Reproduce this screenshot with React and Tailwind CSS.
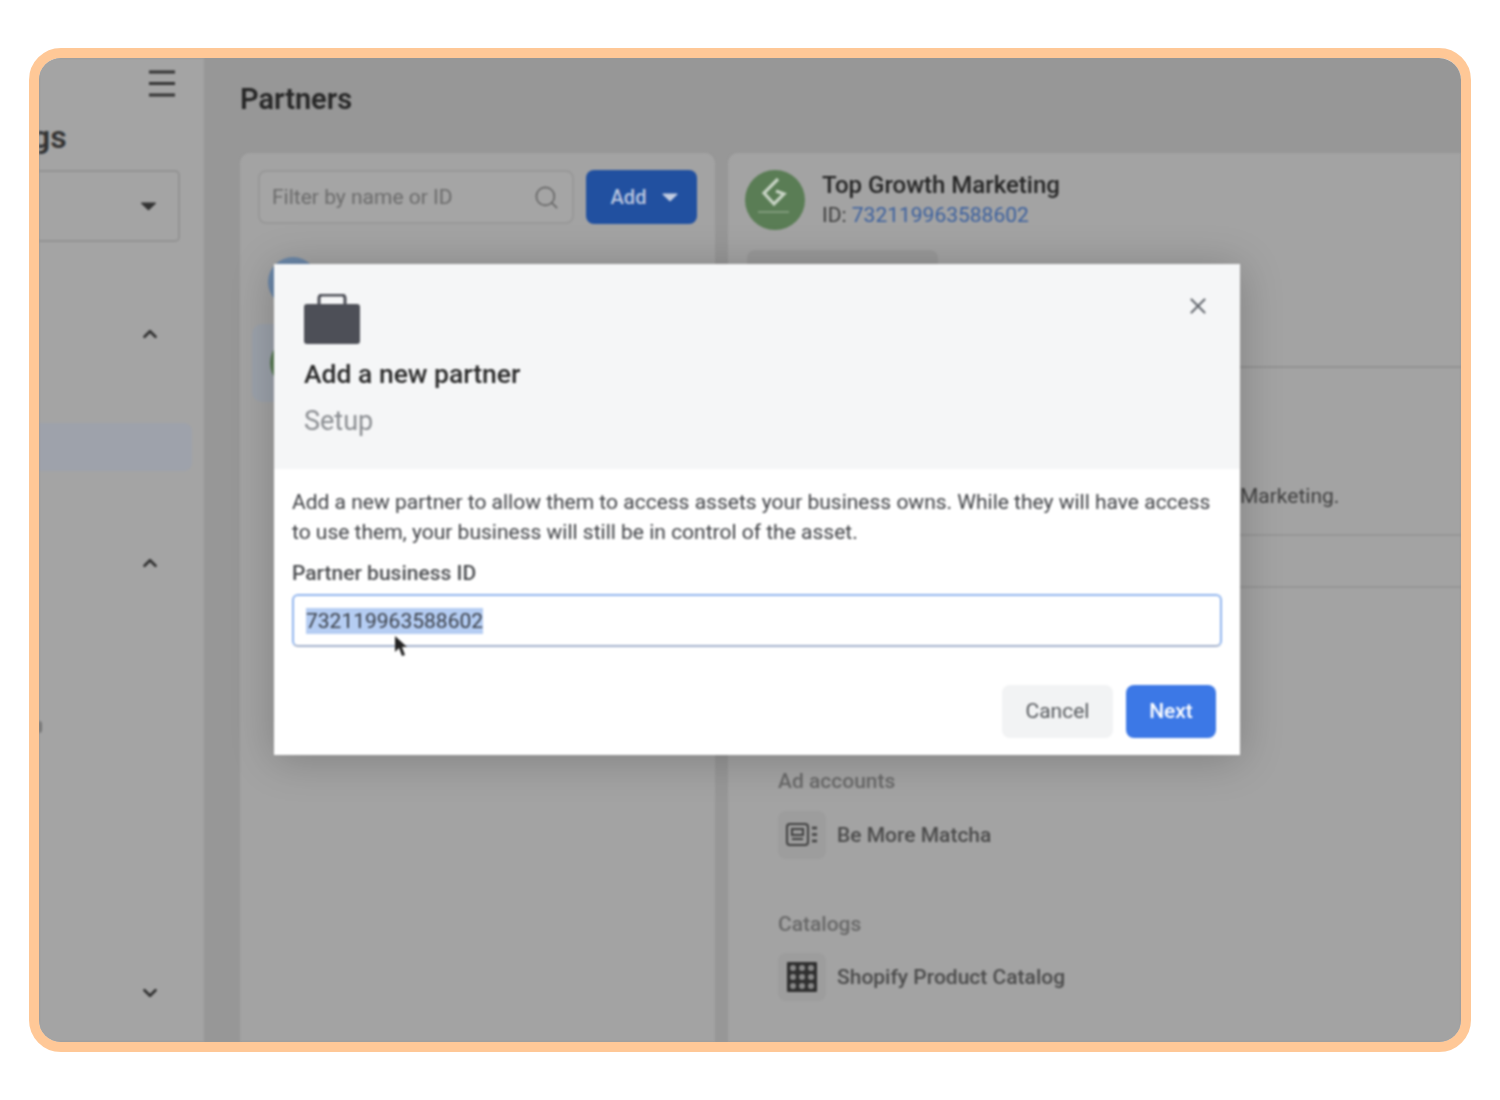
import { ChevronDown, ChevronUp, Search, X } from "lucide-react";

const Caret = ({ className }) => (
  <svg viewBox="0 0 16 10" className={className} fill="currentColor">
    <path d="M1 1.5h14a.6.6 0 0 1 .4 1l-6.8 6.4a.9.9 0 0 1-1.2 0L.6 2.5a.6.6 0 0 1 .4-1z" />
  </svg>
);

const Sidebar = () => (
  <div className="flex h-full w-[165px] shrink-0 flex-col overflow-hidden bg-[#a4a4a4] text-[#333]">
    <div className="mt-[12px] flex justify-end pr-[29px]">
      <svg viewBox="0 0 26 27" className="h-[27px] w-[26px]" stroke="#333" strokeWidth="2.8">
        <path d="M0 2h26M0 13.5h26M0 25h26" />
      </svg>
    </div>
    <div className="mt-[21px] -ml-[7px] h-[38px] text-[32px] leading-[38px] font-semibold">gs</div>
    <div className="mt-[14px] flex h-[72px] w-[141px] items-center justify-end rounded-r-[5px] border-2 border-l-0 border-[#939393] pr-[21px]">
      <Caret className="h-[10px] w-[17px] text-[#333]" />
    </div>
    <div className="mt-[81px] flex justify-end pr-[43px]">
      <ChevronUp size={22} strokeWidth={3} />
    </div>
    <div className="mt-[78px] h-[48px] w-[153px] rounded-r-[8px] bg-[#9ea2ab]" />
    <div className="mt-[81px] flex justify-end pr-[43px]">
      <ChevronUp size={22} strokeWidth={3} />
    </div>
    <div className="mt-[147px] h-[12px] w-[3px] rounded-r-sm bg-[#777]" />
    <div className="mt-[249px] flex justify-end pr-[43px]">
      <ChevronDown size={22} strokeWidth={3} />
    </div>
  </div>
);

const ListCard = () => (
  <div className="h-full w-[475px] shrink-0 overflow-hidden rounded-t-[10px] bg-[#a3a3a3] px-[18px] pt-[17px]">
    <div className="flex gap-[12px]">
      <div className="flex h-[54px] w-[316px] items-center justify-between rounded-[8px] border-2 border-[#989898] bg-[#a5a5a5] pr-[12px] pl-[12px]">
        <span className="pt-[1px] text-[21px] text-[#6b6b6b]">Filter by name or ID</span>
        <Search size={27} strokeWidth={1.5} className="text-[#666]" />
      </div>
      <div className="flex h-[54px] w-[111px] items-center justify-center gap-[16px] rounded-[8px] bg-[#2150a0] pl-[6px] text-[20px] font-medium text-[#bcc8e0]">
        <span>Add</span>
        <Caret className="h-[10px] w-[16px] text-[#c4cee2]" />
      </div>
    </div>
    <div className="mt-[33px] ml-[10px] h-[50px] w-[50px] rounded-full bg-[#6b87a8]" />
    <div className="mt-[17px] -ml-[6px] flex h-[78px] w-[300px] items-center rounded-[10px] bg-[#9ca2ab] pl-[18px]">
      <div className="h-[50px] w-[50px] rounded-full bg-[#5a7d55]" />
    </div>
  </div>
);

const Tile = ({ children }) => (
  <div className="flex h-[48px] w-[48px] items-center justify-center rounded-[8px] bg-[#9d9d9d]">{children}</div>
);

const DetailCard = () => (
  <div className="h-full min-w-0 flex-1 overflow-hidden rounded-tl-[10px] bg-[#a3a3a3]">
    <div className="h-[215px] border-b-2 border-[#929292] pt-[17px] pl-[17px]">
      <div className="flex items-center gap-[17px]">
        <div className="flex h-[60px] w-[60px] items-center justify-center rounded-full bg-[#5a7d55]">
          <svg viewBox="0 0 60 60" className="h-[60px] w-[60px]" fill="none" stroke="#c7d3c4" strokeWidth="3.2">
            <path d="M33 9 19 23l10 11 10-10-8-3" />
            <path d="M13 42h31" stroke="#7f9a7b" strokeWidth="2" />
          </svg>
        </div>
        <div className="-mt-[1px]">
          <div className="text-[24px] leading-[30px] font-medium text-[#262626]">Top Growth Marketing</div>
          <div className="text-[21px] leading-[30px] text-[#3d3d3d]">
            ID: <span className="text-[#3a5f9e]">732119963588602</span>
          </div>
        </div>
      </div>
      <div className="mt-[20px] ml-[2px] h-[40px] w-[191px] rounded-[8px] bg-[#999]" />
    </div>
    <div className="flex h-[168px] items-end border-b-2 border-[#969696] pb-[23px] pl-[512px] text-[21px] leading-[30px] text-[#3f3f3f]">
      Marketing.
    </div>
    <div className="h-[52px] border-b-2 border-[#969696]" />
    <div className="mt-[178px] pl-[50px]">
      <div className="text-[21px] leading-[30px] font-medium text-[#686868]">Ad accounts</div>
      <div className="mt-[15px] flex items-center gap-[11px]">
        <Tile>
          <svg viewBox="0 0 32 24" className="h-[24px] w-[32px]" fill="none" stroke="#3f3f3f" strokeWidth="2">
            <rect x="1" y="1" width="21" height="21" rx="3" />
            <rect x="6" y="6" width="11" height="6" />
            <path d="M6 16h11" />
            <path d="M26 5h5M26 11.500h5M26 18h5" strokeWidth="2.4" />
          </svg>
        </Tile>
        <span className="pt-[1px] text-[21px] font-medium text-[#4b4b4b]">Be More Matcha</span>
      </div>
      <div className="mt-[50px] text-[21px] leading-[30px] font-medium text-[#686868]">Catalogs</div>
      <div className="mt-[14px] flex items-center gap-[11px]">
        <Tile>
          <svg viewBox="0 0 30 30" className="h-[30px] w-[30px]" fill="#8a8a8a">
            <rect width="30" height="30" rx="1" fill="#2f2f2f" />
            <rect x="3" y="3" width="6" height="6" rx="3" />
            <rect x="12" y="3" width="6" height="6" rx="3" />
            <rect x="21" y="3" width="6" height="6" rx="3" />
            <rect x="3" y="12" width="6" height="6" rx="3" />
            <rect x="12" y="12" width="6" height="6" rx="3" />
            <rect x="21" y="12" width="6" height="6" rx="3" />
            <rect x="3" y="21" width="6" height="6" rx="3" />
            <rect x="12" y="21" width="6" height="6" rx="3" />
            <rect x="21" y="21" width="6" height="6" rx="3" />
          </svg>
        </Tile>
        <span className="pt-[2px] text-[21px] font-medium text-[#4b4b4b]">Shopify Product Catalog</span>
      </div>
    </div>
  </div>
);

const Modal = () => (
  <div className="absolute top-[206px] left-[235px] flex h-[491px] w-[966px] flex-col bg-white shadow-[0_4px_40px_rgba(0,0,0,0.22)]">
    <div className="relative h-[205px] bg-[#f5f6f7] pt-[30px] pl-[30px]">
      <svg viewBox="0 0 56 50" className="h-[50px] w-[56px]" fill="#4d4f57">
        <path d="M15 11V4a3 3 0 0 1 3-3h20a3 3 0 0 1 3 3v7" fill="none" stroke="#4d4f57" strokeWidth="3" />
        <rect x="0" y="10" width="56" height="40" rx="3" />
      </svg>
      <div className="mt-[13px] text-[26.500px] leading-[34px] font-medium text-[#2b2b2b]">Add a new partner</div>
      <div className="mt-[13px] text-[27px] leading-[34px] text-[#8a8d91]">Setup</div>
      <X size={26} strokeWidth={2} className="absolute top-[29px] right-[29px] text-[#666a70]" />
    </div>
    <div className="relative flex-1 pt-[18px] pr-[18px] pl-[18px]">
      <p className="text-[21px] leading-[30px] text-[#3f4145]">
        Add a new partner to allow them to access assets your business owns. While they will have access
        <br />
        to use them, your business will still be in control of the asset.
      </p>
      <div className="mt-[11px] text-[21px] leading-[30px] font-medium text-[#4b4d50]">Partner business ID</div>
      <div className="mt-[6px] flex h-[53px] items-center rounded-[6px] border-2 border-[#8fb4ee] border-b-[#a3b1cc] pl-[12px]">
        <span className="bg-[#b5cdf3] text-[21px] leading-[26px] text-[#3a3f48]">732119963588602</span>
      </div>
      <svg viewBox="0 0 14 22" className="absolute top-[167px] left-[120px] h-[22px] w-[14px]" fill="#222">
        <path d="M1 0v16l4-4 3 8 3-1-3-8h5z" />
      </svg>
      <div className="mt-[38px] mr-[6px] flex justify-end gap-[13px]">
        <div className="flex h-[53px] w-[111px] items-center justify-center rounded-[8px] bg-[#f2f3f4] pt-[1px] text-[21px] text-[#55585c]">
          Cancel
        </div>
        <div className="flex h-[53px] w-[90px] items-center justify-center rounded-[8px] bg-[#3c78e6] pt-[1px] text-[21px] font-medium text-white">
          Next
        </div>
      </div>
    </div>
  </div>
);

export default function App() {
  return (
    <div className="h-[1100px] bg-white pt-[48px] pl-[29px] font-['Roboto',sans-serif]">
      <div className="h-[1004px] w-[1442px] rounded-[32px] border-[10px] border-[#ffc897]">
        <div className="h-full overflow-hidden rounded-[22px] bg-[#979797]">
          <div className="relative flex h-full blur-[1px]">
            <Sidebar />
            <div className="flex h-full min-w-0 flex-1 flex-col pl-[36px]">
              <div className="h-[95px] pt-[22px] text-[29px] leading-[38px] font-semibold text-[#262626]">Partners</div>
              <div className="flex min-h-0 flex-1 gap-[13px]">
                <ListCard />
                <DetailCard />
              </div>
            </div>
            <Modal />
          </div>
        </div>
      </div>
    </div>
  );
}
